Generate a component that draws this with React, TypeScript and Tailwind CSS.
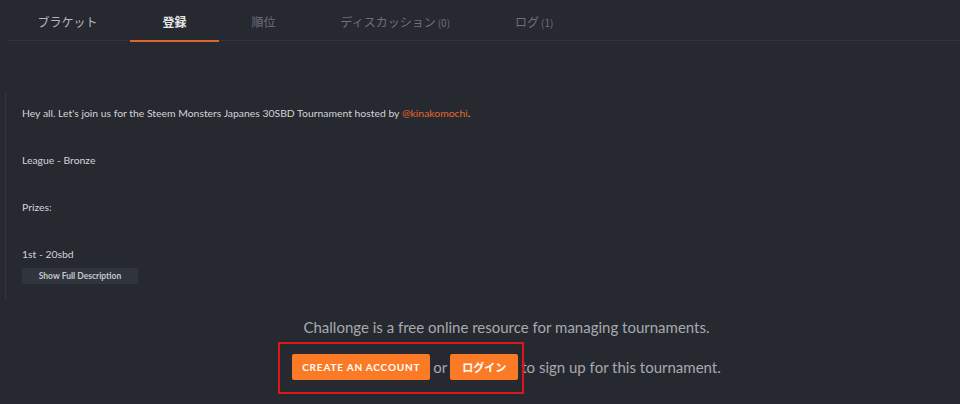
import React from "react";

const tabs = [
  { label: "ブラケット", count: "", cls: "text-[#b4b8bf]" },
  { label: "登録", count: "", cls: "text-[#e4e5e7] font-bold", active: true },
  { label: "順位", count: "", cls: "text-[#6d717a]" },
  { label: "ディスカッション", count: "(0)", cls: "text-[#6d717a]" },
  { label: "ログ", count: "(1)", cls: "text-[#6d717a]" },
];

export default function App() {
  return (
    <div
      className="w-[960px] h-[404px] bg-[#262930] overflow-hidden relative"
      style={{ fontFamily: "Lato, 'Noto Sans CJK JP', sans-serif" }}
    >
      {/* tabs */}
      <div className="flex pl-[5px] h-[42px] relative">
        <div className="absolute left-[8px] right-0 top-[40px] h-px bg-[#30343c]" />
        {tabs.map((t) => (
          <div
            key={t.label}
            className={`relative flex items-center px-[32.5px] h-[42px] pt-[2px] text-[12px] ${t.cls}`}
            style={{ fontFamily: "'Noto Sans CJK JP', sans-serif" }}
          >
            <span>{t.label}</span>
            {t.count && <span className="text-[10px] ml-[2px]">{t.count}</span>}
            {t.active && (
              <div className="absolute left-0 right-0 bottom-0 h-[2px] bg-[#e0672a]" />
            )}
          </div>
        ))}
      </div>

      {/* description */}
      <div className="mt-[50px] ml-[5px] border-l border-[#31353d] h-[208px] pl-[16px] pt-[14px] text-[10.4px] text-[#d3d4d6]">
        <p className="h-[47px]">
          Hey all. Let's join us for the Steem Monsters Japanes 30SBD Tournament hosted by{" "}
          <span className="text-[#e8672c]">@kinakomochi</span>.
        </p>
        <p className="h-[47px]">League - Bronze</p>
        <p className="h-[47px]">Prizes:</p>
        <p className="h-[15px]">1st - 20sbd</p>
        <button className="block mt-[6px] w-[116px] h-[16px] bg-[#30343d] text-[8.5px] font-bold text-[#c5c7cb] leading-[16px] text-center">
          Show Full Description
        </button>
      </div>

      {/* signup */}
      <div className="pl-[53px] mt-[11px] flex flex-col items-center text-[#a6a9ae] text-[15px]">
        <div className="h-[32px] leading-[32px]">
          Challonge is a free online resource for managing tournaments.
        </div>
        <div className="flex items-center mt-[11px] h-[26px]">
          <button className="h-[26px] w-[138px] bg-[#fb7a25] text-white text-[10px] font-bold tracking-[0.08em] rounded-[2px]">
            CREATE AN ACCOUNT
          </button>
          <span className="mx-[3px]">or</span>
          <button
            className="h-[26px] w-[68px] bg-[#fb7a25] text-white text-[11px] font-bold rounded-[2px]"
            style={{ fontFamily: "'Noto Sans CJK JP', sans-serif" }}
          >
            ログイン
          </button>
          <span className="ml-[3px]">to sign up for this tournament.</span>
        </div>
      </div>

      {/* annotation box */}
      <div className="absolute left-[278px] top-[342px] w-[246px] h-[52px] border-2 border-[#e0141b]" />
    </div>
  );
}
